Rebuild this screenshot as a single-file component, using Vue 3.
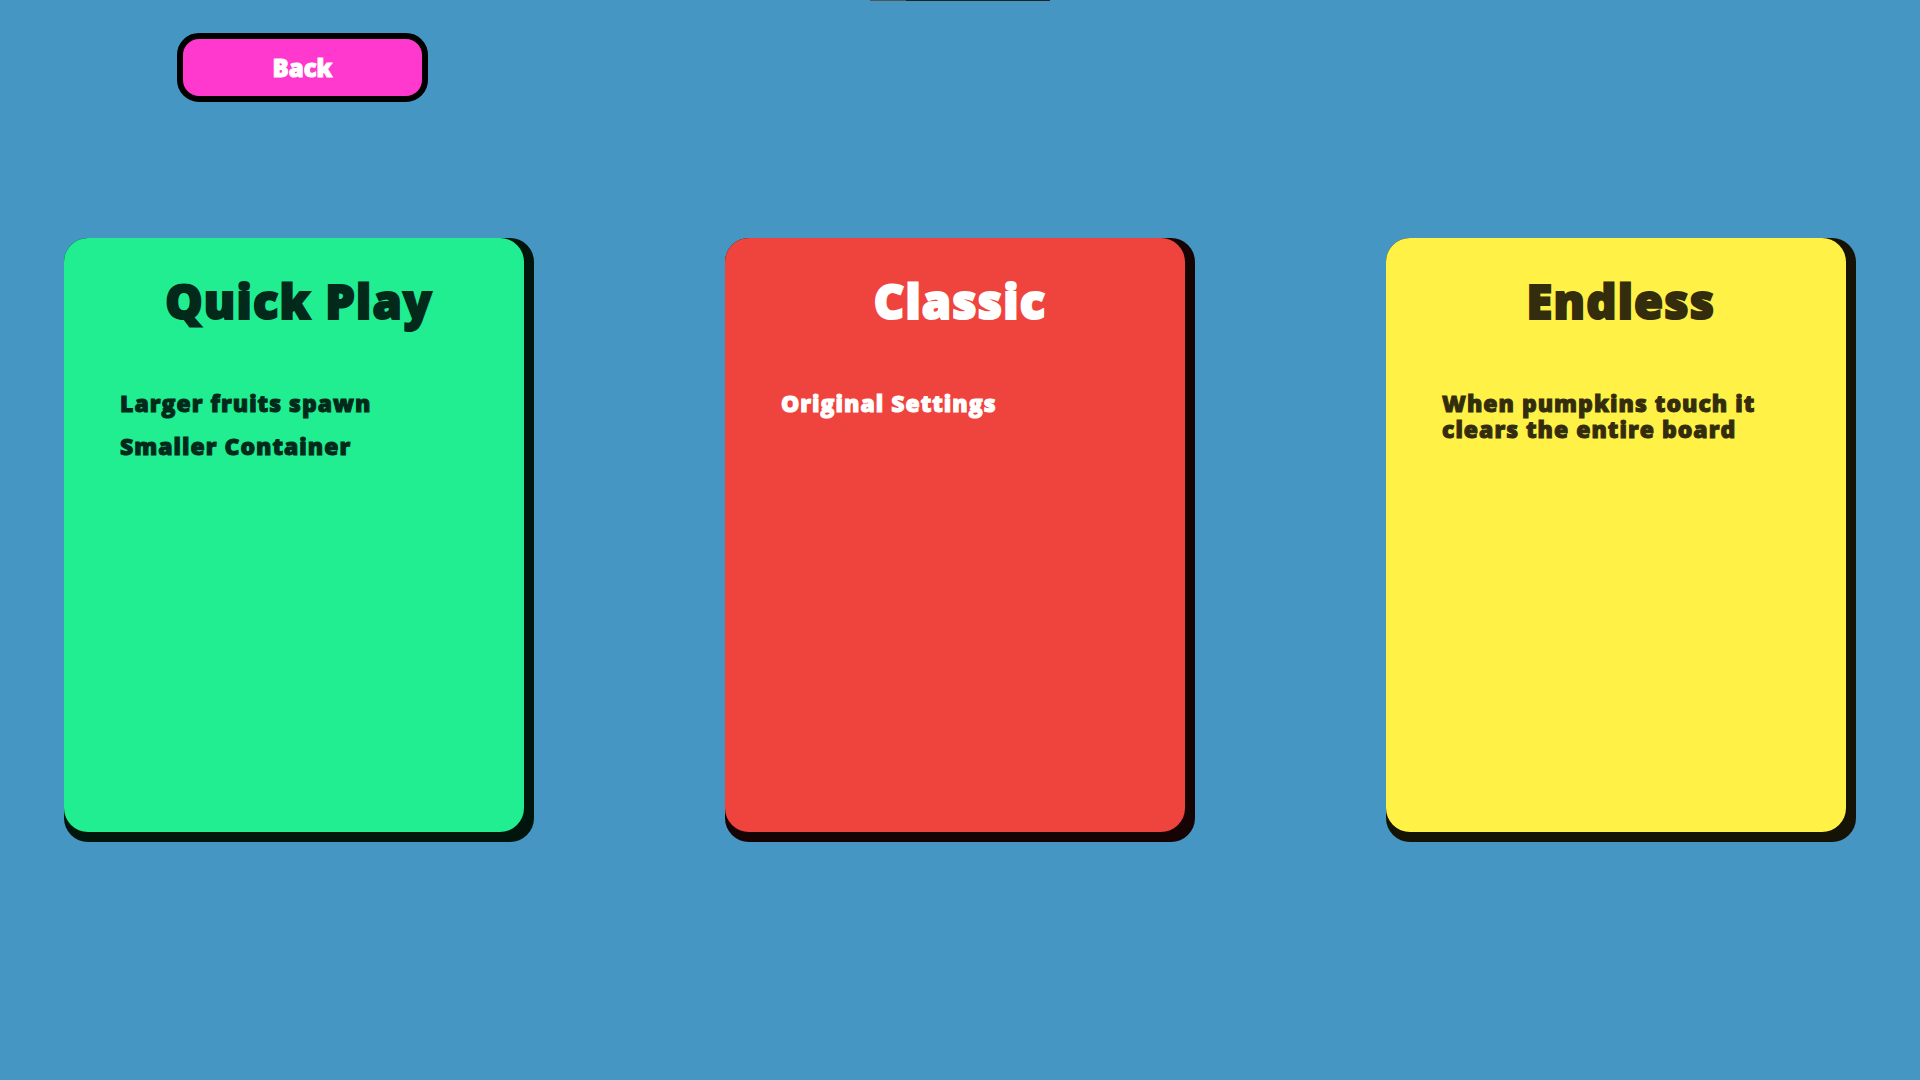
<script setup>
const modes = [
  { name: "Quick Play", theme: "green", lines: ["Larger fruits spawn", "Smaller Container"] },
  { name: "Classic", theme: "red", lines: ["Original Settings"] },
  { name: "Endless", theme: "yellow", lines: ["When pumpkins touch it clears the entire board"] },
];
</script>

<template>
  <div class="page">
    <div class="top-bar"><span class="top-bar__fill"></span></div>
    <button class="back">Back</button>
    <div class="modes">
      <section v-for="mode in modes" :key="mode.name" class="card" :class="`card--${mode.theme}`">
        <h2 class="card__title">{{ mode.name }}</h2>
        <p v-for="line in mode.lines" :key="line" class="card__line">{{ line }}</p>
      </section>
    </div>
  </div>
</template>

<style scoped>
.page {
  position: relative;
  box-sizing: border-box;
  height: 1080px;
  padding-top: 33px;
  overflow: hidden;
  background: #4596c2;
  font-family: "Open Sans", "Liberation Sans", sans-serif;
  font-weight: 800;
}

.top-bar {
  position: absolute;
  top: 0;
  left: 870px;
  width: 180px;
  height: 1px;
  background: #222;
}

.top-bar__fill {
  display: block;
  width: 36px;
  height: 100%;
  background: #555;
}

.back {
  display: block;
  box-sizing: border-box;
  width: 251px;
  height: 69px;
  margin: 0 0 136px 177px;
  border: 6px solid #000;
  border-radius: 22px;
  background: #ff38ce;
  color: #fff;
  font: inherit;
  font-size: 24px;
  -webkit-text-stroke: 1px currentColor;
}

.modes {
  display: flex;
  justify-content: space-between;
  padding: 0 64px;
}

.card {
  position: relative;
  box-sizing: border-box;
  width: 470px;
  height: 604px;
  padding: 31px 56px;
  border-radius: 24px;
  background: var(--edge);
  color: var(--ink);
}

/* the coloured face sits over the dark card, leaving a 10px lip right and bottom */
.card::before {
  content: "";
  position: absolute;
  top: 0;
  left: 0;
  right: 10px;
  bottom: 10px;
  border-radius: 24px;
  background: var(--face);
}

.card--green {
  --face: #20ee90;
  --edge: #00150b;
  --ink: #03291a;
}

.card--red {
  --face: #ef443e;
  --edge: #150403;
  --ink: #fff;
}

.card--yellow {
  --face: #fff145;
  --edge: #151305;
  --ink: #332d0d;
}

.card__title {
  position: relative;
  margin: 0 0 57px;
  text-align: center;
  font-size: 47px;
  line-height: 64px;
  letter-spacing: 1.2px;
  font-weight: 800;
  -webkit-text-stroke: 2px currentColor;
}

.card__line {
  position: relative;
  margin: 0 0 17px;
  font-size: 23px;
  line-height: 26px;
  letter-spacing: 1px;
  -webkit-text-stroke: 1px currentColor;
}
</style>
